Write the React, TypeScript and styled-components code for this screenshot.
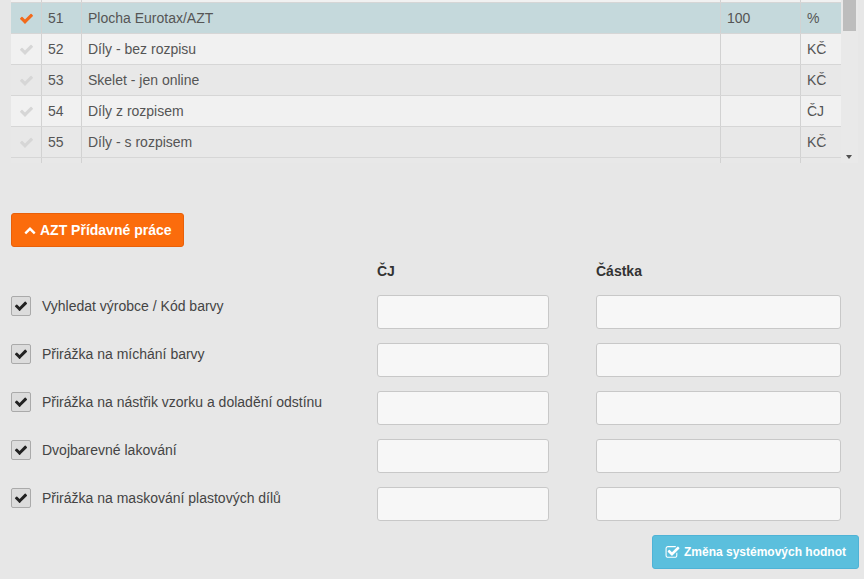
import React from 'react'
import styled, { createGlobalStyle } from 'styled-components'

const GlobalStyle = createGlobalStyle`
  html, body {
    margin: 0;
    padding: 0;
    background: #e7e7e7;
    font-family: "Liberation Sans", Arial, sans-serif;
    font-size: 14px;
    color: #444;
  }
`

// Font Awesome 4 style glyphs, drawn inline
const Check = ({ size = 14 }: { size?: number }) => (
  <svg width={size} height={size} viewBox="0 0 1792 1792" fill="currentColor">
    <path d="M1671 566q0 40-28 68l-724 724-136 136q-28 28-68 28t-68-28l-136-136-362-362q-28-28-28-68t28-68l136-136q28-28 68-28t68 28l294 295 656-657q28-28 68-28t68 28l136 136q28 28 28 68z" />
  </svg>
)

const ChevronUp = () => (
  <svg width={12} height={12} viewBox="0 0 1792 1792" fill="currentColor">
    <path d="M1683 1331l-166 165q-19 19-45 19t-45-19l-531-531-531 531q-19 19-45 19t-45-19l-166-165q-19-19-19-45.5t19-45.5l742-741q19-19 45-19t45 19l742 741q19 19 19 45.5t-19 45.5z" />
  </svg>
)

const CheckSquare = () => (
  <svg width={15} height={15} viewBox="0 0 1792 1792" fill="currentColor">
    <path d="M1472 930v318q0 119-84.5 203.5t-203.5 84.5h-832q-119 0-203.5-84.5t-84.5-203.5v-832q0-119 84.5-203.5t203.5-84.5h832q63 0 117 25 15 7 18 23 3 17-9 29l-49 49q-10 10-23 10-3 0-9-2-23-6-45-6h-832q-66 0-113 47t-47 113v832q0 66 47 113t113 47h832q66 0 113-47t47-113v-254q0-13 9-22l64-64q10-10 23-10 6 0 12 3 20 8 20 29zm231-489l-814 814q-24 24-57 24t-57-24l-430-430q-24-24-24-57t24-57l110-110q24-24 57-24t57 24l263 263 647-647q24-24 57-24t57 24l110 110q24 24 24 57t-24 57z" />
  </svg>
)

const Page = styled.div`
  width: 864px;
  height: 579px;
  box-sizing: border-box;
  padding: 0 6px 0 11px;
  overflow: hidden;
`

const TableWrap = styled.div`
  display: flex;
  height: 163px;
  overflow: hidden;
`

const Grid = styled.div`
  width: 830px;
  display: flex;
  flex-direction: column;
`

const Row = styled.div<{ $bg: string; $h?: number }>`
  display: grid;
  grid-template-columns: 30px 40px 639px 80px 41px;
  height: ${p => p.$h ?? 30}px;
  flex: none;
  background: ${p => p.$bg};
  border-bottom: 1px solid #d6d6d6;
  overflow: hidden;
`

const Cell = styled.div<{ $first?: boolean }>`
  display: flex;
  align-items: center;
  padding-left: 6px;
  border-left: ${p => (p.$first ? 'none' : '1px solid #d2d2d2')};
  color: #555;
  white-space: nowrap;
`

const CheckCell = styled(Cell)<{ $active?: boolean }>`
  justify-content: center;
  padding-left: 1px;
  color: ${p => (p.$active ? '#f26a1b' : '#d6d6d6')};
`

const Scrollbar = styled.div`
  width: 17px;
  flex: none;
  position: relative;
  background: #e9e9e9;
`

const Thumb = styled.div`
  margin: 0 2px;
  height: 31px;
  background: #bdbdbd;
`

const Arrow = styled.div`
  position: absolute;
  left: 5px;
  bottom: 4px;
  width: 0;
  height: 0;
  border-left: 3.5px solid transparent;
  border-right: 3.5px solid transparent;
  border-top: 4px solid #505050;
`

const OrangeButton = styled.button`
  margin-top: 50px;
  display: inline-flex;
  align-items: center;
  gap: 4px;
  height: 34px;
  padding: 0 11px 0 12px;
  background: #fb6c0c;
  border: 1px solid #e8600a;
  border-radius: 3px;
  color: #fff;
  font-family: inherit;
  font-size: 14px;
  font-weight: bold;
`

const Form = styled.div`
  margin-top: 16px;
  width: 830px;
  display: grid;
  grid-template-columns: 319px 172px 245px;
  column-gap: 47px;
  row-gap: 14px;
`

const Head = styled.div`
  font-weight: bold;
  color: #333;
  font-size: 14px;
  height: 16px;
  margin-bottom: 2px;
`

const Label = styled.label`
  display: flex;
  align-items: flex-start;
  gap: 11px;
  padding-top: 1px;
  color: #444;
  line-height: 20px;
`

const Box = styled.span`
  width: 18px;
  height: 18px;
  flex: none;
  border: 1px solid #aaa;
  border-radius: 2px;
  background: #dcdcdc;
  display: flex;
  align-items: center;
  justify-content: center;
  color: #222;
`

const Input = styled.input`
  box-sizing: border-box;
  height: 34px;
  width: 100%;
  border: 1px solid #c8c8c8;
  border-radius: 3px;
  background: #f7f7f7;
  font-family: inherit;
`

const Footer = styled.div`
  display: flex;
  justify-content: flex-end;
  margin-top: 14px;
`

const InfoButton = styled.button`
  display: inline-flex;
  align-items: center;
  gap: 4px;
  height: 34px;
  padding: 0 12px 0 12px;
  margin-right: -1px;
  background: #5bbfdd;
  border: 1px solid #4fb3d6;
  border-radius: 3px;
  color: #fff;
  font-family: inherit;
  font-size: 12px;
  font-weight: bold;
`

const rows = [
  { no: 51, name: 'Plocha Eurotax/AZT', value: '100', unit: '%', active: true },
  { no: 52, name: 'Díly - bez rozpisu', value: '', unit: 'KČ' },
  { no: 53, name: 'Skelet - jen online', value: '', unit: 'KČ' },
  { no: 54, name: 'Díly z rozpisem', value: '', unit: 'ČJ' },
  { no: 55, name: 'Díly - s rozpisem', value: '', unit: 'KČ' },
]

const extras = [
  'Vyhledat výrobce / Kód barvy',
  'Přirážka na míchání barvy',
  'Přirážka na nástřik vzorku a doladění odstínu',
  'Dvojbarevné lakování',
  'Přirážka na maskování plastových dílů',
]

const bgFor = (i: number, active?: boolean) =>
  active ? '#c5d9dc' : i % 2 === 1 ? '#e8e8e8' : '#f1f1f1'

export default function App() {
  return (
    <Page>
      <GlobalStyle />
      <TableWrap>
        <Grid>
          <Row $bg="#f1f1f1" $h={2}>
            <Cell $first /><Cell /><Cell /><Cell /><Cell />
          </Row>
          {rows.map((r, i) => (
            <Row key={r.no} $bg={bgFor(i + 1, r.active)}>
              <CheckCell $first $active={r.active}><Check size={15} /></CheckCell>
              <Cell>{r.no}</Cell>
              <Cell>{r.name}</Cell>
              <Cell>{r.value}</Cell>
              <Cell>{r.unit}</Cell>
            </Row>
          ))}
          <Row $bg="#e8e8e8" $h={10}>
            <Cell $first /><Cell /><Cell /><Cell /><Cell />
          </Row>
        </Grid>
        <Scrollbar>
          <Thumb />
          <Arrow />
        </Scrollbar>
      </TableWrap>

      <OrangeButton><ChevronUp /> AZT Přídavné práce</OrangeButton>

      <Form>
        <div />
        <Head>ČJ</Head>
        <Head>Částka</Head>
        {extras.map(t => (
          <React.Fragment key={t}>
            <Label><Box><Check size={14} /></Box>{t}</Label>
            <Input />
            <Input />
          </React.Fragment>
        ))}
      </Form>

      <Footer>
        <InfoButton><CheckSquare /> Změna systémových hodnot</InfoButton>
      </Footer>
    </Page>
  )
}
